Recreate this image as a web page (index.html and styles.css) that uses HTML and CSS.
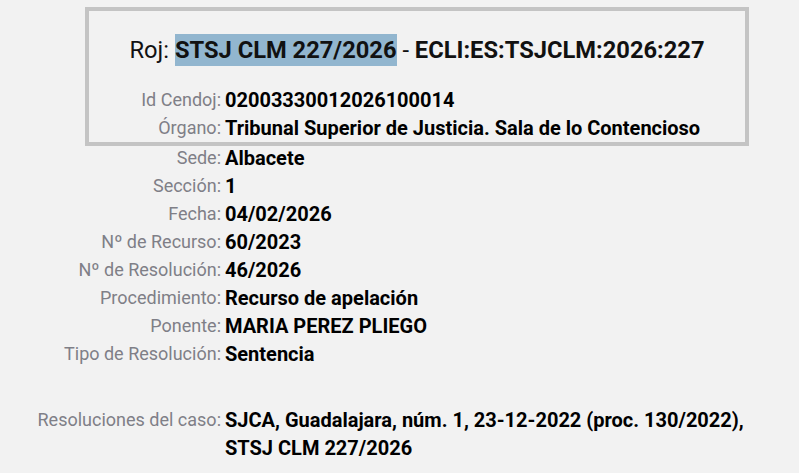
FILE: index.html
```html
<!DOCTYPE html>
<html>
    <head>
        <meta charset="UTF-8">
        <title>Roj: STSJ CLM 227/2026</title>
        <link rel="stylesheet" href="styles.css">
    </head>
    <body>
        <div class="doc-head">
            <h1 class="doc-title">Roj: <span class="roj">STSJ CLM 227/2026</span> - <b>ECLI:ES:TSJCLM:2026:227</b></h1>
            <div class="row"><span class="label">Id Cendoj:</span><span class="value">02003330012026100014</span></div>
            <div class="row"><span class="label">Órgano:</span><span class="value">Tribunal Superior de Justicia. Sala de lo Contencioso</span></div>
        </div>
        <div class="fields">
            <div class="row"><span class="label">Sede:</span><span class="value">Albacete</span></div>
            <div class="row"><span class="label">Sección:</span><span class="value">1</span></div>
            <div class="row"><span class="label">Fecha:</span><span class="value">04/02/2026</span></div>
            <div class="row"><span class="label">Nº de Recurso:</span><span class="value">60/2023</span></div>
            <div class="row"><span class="label">Nº de Resolución:</span><span class="value">46/2026</span></div>
            <div class="row"><span class="label">Procedimiento:</span><span class="value">Recurso de apelación</span></div>
            <div class="row"><span class="label">Ponente:</span><span class="value">MARIA PEREZ PLIEGO</span></div>
            <div class="row"><span class="label">Tipo de Resolución:</span><span class="value">Sentencia</span></div>
            <div class="row row-case"><span class="label">Resoluciones del caso:</span><span class="value">SJCA, Guadalajara, núm. 1, 23-12-2022 (proc. 130/2022),<br>STSJ CLM 227/2026</span></div>
        </div>
    </body>
</html>
```

FILE: styles.css
```css
html, body {
    margin: 0;
    height: 100%;
    background-color: #f2f2f2;

    font-family: Roboto, "Liberation Sans", sans-serif;
}

.doc-head {
    --label-w: 132px;

    margin: 7px 0 0 85px;
    width: 656px;
    border: 4px solid #c4c4c4;
}

.doc-title {
    margin: 23px 0 20px;
    text-align: center;
    font-size: 23.7px;
    font-weight: normal;
    line-height: 32px;
    color: #111;
}

.roj {
    font-weight: bold;
    background-color: #92b6cf;
    padding: 2px 0;
}

.fields {
    --label-w: 221px;

    margin-top: -2px;
}

.row {
    display: grid;
    grid-template-columns: var(--label-w) 1fr;
    column-gap: 4px;
    line-height: 28px;
}

.label {
    text-align: right;
    font-size: 18px;
    color: #7f7f87;
}

.value {
    font-size: 20px;
    font-weight: bold;
    color: #000;
}

.row-case {
    margin-top: 38px;
}
```
